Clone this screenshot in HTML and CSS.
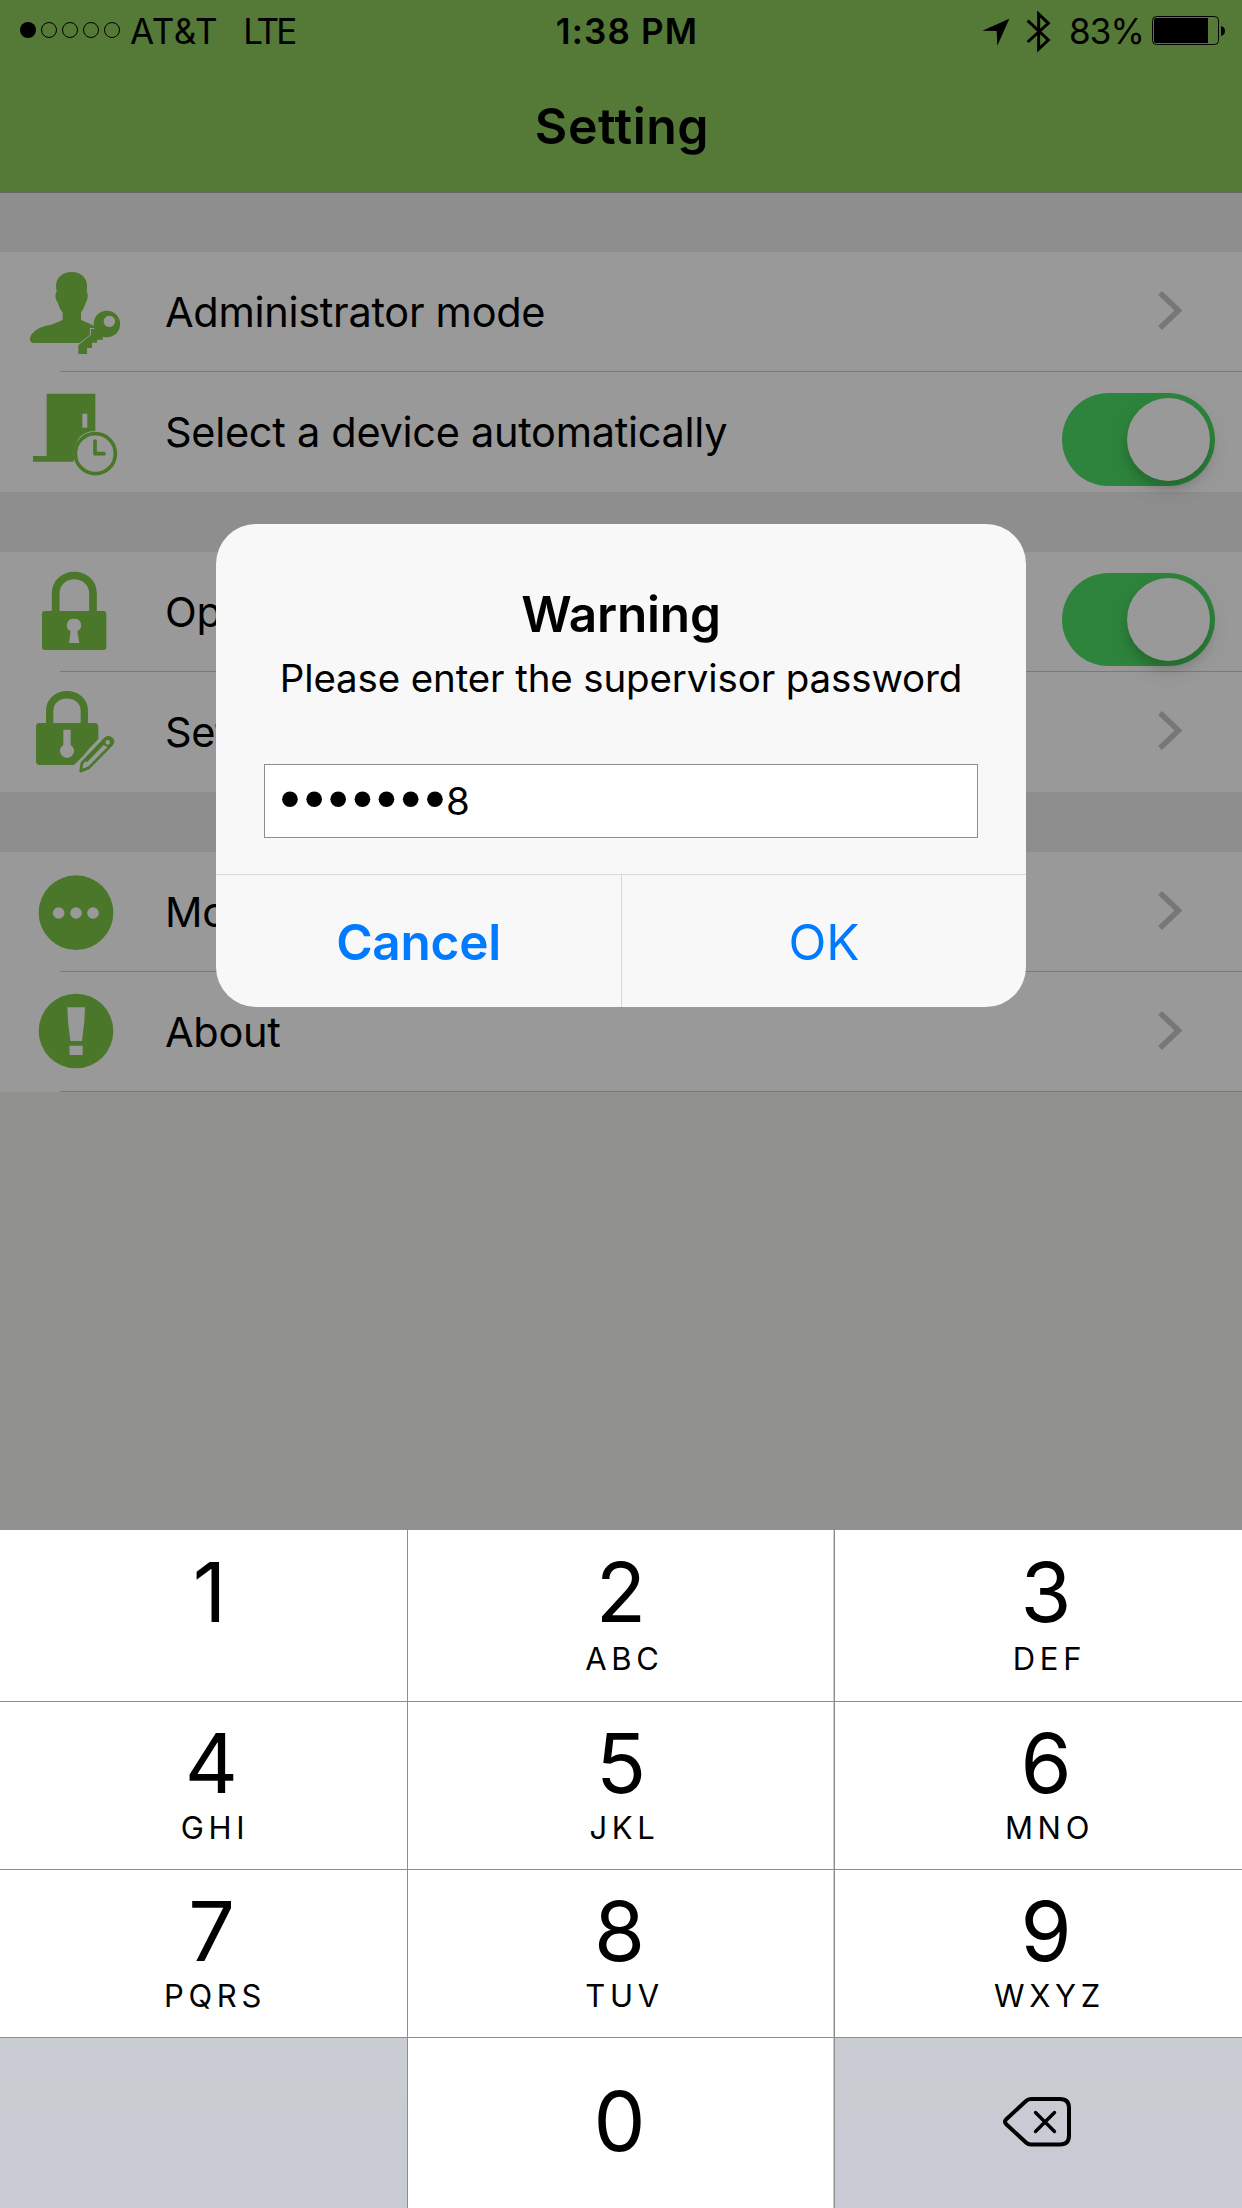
FILE: index.html
```
<!DOCTYPE html>
<html lang="en">
<head>
<meta charset="utf-8">
<title>Setting</title>
<link rel="stylesheet" href="styles.css">
</head>
<body>
<div class="screen">
  <header class="header">
    <div class="status">
      <div class="status-left">
        <svg class="signal" width="101" height="18" viewBox="0 0 101 18">
          <circle cx="8" cy="9" r="8"/>
          <g fill="none" stroke="#000" stroke-width="1"><circle cx="29" cy="9" r="7.5"/><circle cx="50" cy="9" r="7.5"/><circle cx="71" cy="9" r="7.5"/><circle cx="92" cy="9" r="7.5"/></g>
        </svg>
        <span class="carrier">AT&amp;T</span>
        <span class="network">LTE</span>
      </div>
      <div class="clock">1:38 PM</div>
      <div class="status-right">
        <svg class="status-icons" width="70" height="44" viewBox="60 24 210 132">
          <path d="M64 89L145 53L109 134L107 90Z"/>
          <path d="M200 59L262 117L233 144V39L262 67L200 123" fill="none" stroke="#000" stroke-width="9"/>
        </svg>
        <span class="percent">83%</span>
        <svg class="battery" width="74" height="30" viewBox="0 0 74 30">
          <rect x=".5" y=".5" width="66" height="28" rx="4" fill="none" stroke="#000"/>
          <path d="M4 2H56V27H4a2 2 0 0 1-2-2V4a2 2 0 0 1 2-2ZM69 10q4 1 4 5t-4 5Z"/>
        </svg>
      </div>
    </div>
    <h1 class="title">Setting</h1>
  </header>

  <main class="settings">
    <section class="group">
      <div class="row">
        <svg class="row-icon" viewBox="0 36 504 360">
          <path d="M215 96C244 96 263 114 261 142L260 155C265 160 264 178 257 188C253 202 248 211 243 217V239C258 248 272 249 282 259L283 264H270V284L239 309H101C91 309 88 299 91 291C99 271 124 259 151 255C164 250 178 245 188 239V217C182 211 177 201 174 188C166 180 164 162 170 155L168 140C168 113 187 96 215 96Z"/>
          <path fill-rule="evenodd" d="M320 212a40 40 0 1 1-12 78V299H291V308H276V324H261V342H235V316L273 284V267H284C274 240 292 212 320 212ZM328 227a17 17 0 1 0 .1 0Z"/>
        </svg>
        <span class="label">Administrator mode</span>
        <svg class="chevron" viewBox="0 0 26 42"><path d="M3 3L21.5 20.5L3 38"/></svg>
      </div>
      <div class="row">
        <svg class="row-icon" viewBox="0 396 504 360">
          <path fill-rule="evenodd" d="M140 461H286V573Q252 572 233 599Q216 629 223 659L219 665H99V648H140ZM247 521V563H262V521Z"/>
          <circle cx="286" cy="641" r="60" class="line" stroke-width="11"/>
          <path class="line" stroke-width="11" stroke-linecap="round" stroke-linejoin="round" d="M285 603V641H312"/>
        </svg>
        <span class="label">Select a device automatically</span>
        <span class="toggle"><span class="knob"></span></span>
      </div>
    </section>
    <section class="group">
      <div class="row">
        <svg class="row-icon" viewBox="0 36 504 360">
          <path class="line" stroke-width="23" d="M167 216V162C167 88 279 88 279 162V216"/>
          <path fill-rule="evenodd" d="M134 213H310Q319 213 319 222V321Q319 330 310 330H135Q126 330 126 321V222Q126 213 134 213ZM222 236A20 20 0 0 0 212 274L207 309H238L232 274A20 20 0 0 0 222 236Z"/>
        </svg>
        <span class="label">Op</span>
        <span class="toggle"><span class="knob"></span></span>
      </div>
      <div class="row">
        <svg class="row-icon" viewBox="0 396 504 360">
          <path class="line" stroke-width="22" d="M149 553V513C149 448 253 448 253 513V553"/>
          <path fill-rule="evenodd" d="M118 549H284Q295 550 295 561V597L266 628L252 645L222 675H118Q108 674 108 664V560Q108 550 118 549ZM190 569V615A21 21 0 1 0 212 615V569Z"/>
          <path class="line" stroke-width="8" stroke-linejoin="round" d="M242 693L246 669L311 601Q321 587 334 595Q343 604 335 614L267 683Z"/>
          <path class="line" stroke-width="8" d="M242 693L267 683M258 664L314 606"/>
          <circle cx="323" cy="607" r="10" class="line" stroke-width="6"/>
        </svg>
        <span class="label">Set</span>
        <svg class="chevron" viewBox="0 0 26 42"><path d="M3 3L21.5 20.5L3 38"/></svg>
      </div>
    </section>
    <section class="group last">
      <div class="row">
        <svg class="row-icon" viewBox="0 36 504 360">
          <circle cx="228" cy="218" r="112"/>
          <g class="cut"><circle cx="176" cy="219" r="17.5"/><circle cx="228" cy="219" r="17.5"/><circle cx="279" cy="219" r="17.5"/></g>
        </svg>
        <span class="label">Mo</span>
        <svg class="chevron" viewBox="0 0 26 42"><path d="M3 3L21.5 20.5L3 38"/></svg>
      </div>
      <div class="row">
        <svg class="row-icon" viewBox="0 396 504 360">
          <circle cx="228" cy="573" r="112"/>
          <path class="cut" d="M202 502H255L253 544L246 603H211L204 544ZM208 617H248V645H209Z"/>
        </svg>
        <span class="label">About</span>
        <svg class="chevron" viewBox="0 0 26 42"><path d="M3 3L21.5 20.5L3 38"/></svg>
      </div>
    </section>
  </main>

  <div class="keypad">
    <div class="key"><span class="digit one">1</span></div>
    <div class="key"><span class="digit">2</span><span class="letters">ABC</span></div>
    <div class="key"><span class="digit">3</span><span class="letters">DEF</span></div>
    <div class="key"><span class="digit">4</span><span class="letters">GHI</span></div>
    <div class="key"><span class="digit">5</span><span class="letters">JKL</span></div>
    <div class="key"><span class="digit">6</span><span class="letters">MNO</span></div>
    <div class="key"><span class="digit">7</span><span class="letters">PQRS</span></div>
    <div class="key"><span class="digit round">8</span><span class="letters">TUV</span></div>
    <div class="key"><span class="digit">9</span><span class="letters">WXYZ</span></div>
    <div class="key blank"></div>
    <div class="key zero"><span class="digit round">0</span></div>
    <div class="key blank delete">
      <svg width="70" height="52" viewBox="0 0 70 52" fill="none" stroke="#000" stroke-linecap="round" stroke-linejoin="round">
        <path stroke-width="4" d="M29 3H58Q67 3 67 12V39.500Q67 48.500 58 48.500H29Q26 48.500 24 46.500L4 28Q2 25.700 4 23.500L24 5Q26 3 29 3Z"/>
        <path stroke-width="3.400" d="M33.500 16.500L52.500 35.500M52.500 16.500L33.500 35.500"/>
      </svg>
    </div>
  </div>

  <div class="dialog">
    <h2 class="dialog-title">Warning</h2>
    <p class="dialog-text">Please enter the supervisor password</p>
    <div class="field"><span class="bullets">•••••••</span><span>8</span></div>
    <div class="actions">
      <div class="action cancel">Cancel</div>
      <div class="action ok">OK</div>
    </div>
  </div>
</div>
</body>
</html>
```
FILE: styles.css
```
* { box-sizing: border-box; }
body { margin: 0; font-family: Inter, "Liberation Sans", sans-serif; color: #000; }
h1, h2, p { margin: 0; }
svg { display: block; flex: none; }

.screen { position: relative; width: 1242px; height: 2208px; overflow: hidden; background: #91918f; display: flex; flex-direction: column; }

/* Header */
.header { height: 193px; flex: none; background: #557937; border-bottom: 1px solid #66666a; }
.status { height: 62px; padding: 0 16px 0 20px; display: grid; grid-template-columns: 1fr auto 1fr; align-items: center; font-size: 35px; line-height: 62px; white-space: nowrap; }
.status-left, .status-right { display: flex; align-items: center; }
.status-right { justify-content: flex-end; }
.signal { margin-bottom: 2px; }
.carrier { margin-left: 9px; letter-spacing: .6px; }
.network { margin-left: 25px; letter-spacing: -3px; }
.clock { font-weight: 600; letter-spacing: 1.2px; padding-left: 8px; }
.percent { margin-left: 18px; letter-spacing: -.9px; }
.battery { margin-left: 8px; }
.title { font-size: 50px; font-weight: 600; line-height: 128px; letter-spacing: .5px; text-align: center; padding-left: 2px; }

/* Settings list */
.settings { flex: 1; }
.group { background: #999; border-top: 60px solid #8e8e8e; height: 300px; }
.group:first-child { border-top-width: 59px; height: 299px; }
.row { position: relative; height: 120px; display: flex; align-items: center; }
.row:first-child::after, .last .row::after { content: ""; position: absolute; left: 60px; right: 0; bottom: 0; height: 1px; background: #79797a; }
.row-icon { width: 168px; height: 120px; fill: #4a7729; margin-right: -3px; }
.row-icon .line { fill: none; stroke: #4a7729; }
.row-icon .cut { fill: #999; }
.label { flex: 1; font-size: 41.5px; line-height: 120px; letter-spacing: -.3px; white-space: nowrap; }
.chevron { width: 26px; height: 42px; margin: 0 59px 2px 0; fill: none; stroke: #77777a; stroke-width: 5.5; }
.toggle { width: 153px; height: 93px; margin: 15px 27px 0 0; padding: 5px; border-radius: 47px; background: #2e843c; display: flex; justify-content: flex-end; z-index: 1; }
.knob { width: 83px; height: 83px; border-radius: 50%; background: #999; box-shadow: 0 8px 10px rgba(0,0,0,.13), 0 8px 24px rgba(0,0,0,.1); }

/* Numeric keypad */
.keypad { height: 678px; flex: none; background: #fff; display: grid; grid-template-columns: 408px 427px 407px; grid-template-rows: 172px 168px 168px 170px; }
.key { padding: 21px 0 0; display: flex; flex-direction: column; align-items: center; border-bottom: 1px solid #8e8e8e; }
.key:nth-child(-n+3) { padding-top: 22px; }
.key:nth-child(3n+1) { padding-left: 16px; border-right: 1px solid #8e8e8e; }
.key:nth-child(3n+2) { border-right: 1px solid #8e8e8e; box-shadow: inset -1px 0 #ccc; }
.key:nth-child(3n) { padding-left: 15px; }
.key:nth-child(n+10) { border-bottom: 0; }
.digit { font-size: 82.5px; line-height: 80px; }
.digit.one { padding-right: 4px; }
.digit.round { padding-right: 3px; }
.letters { margin-top: 5px; padding-left: 7px; font-size: 31px; line-height: 40px; letter-spacing: 4.7px; }
.key:nth-child(-n+3) .letters { margin-top: 7px; }
.zero { padding-top: 43px; }
.blank { background: linear-gradient(#c9cdd1, #c9ccd4 14%, #c9cdd1 32%, #c8cbd3 48%); }
.key.delete { align-items: flex-start; padding-top: 58px; padding-left: 167px; }

/* Password prompt */
.dialog { position: absolute; left: 216px; top: 524px; width: 810px; height: 483px; padding-top: 60px; border-radius: 40px; background: #f8f8f8; overflow: hidden; text-align: center; }
.dialog-title { font-size: 49.5px; font-weight: 600; line-height: 60px; letter-spacing: -.2px; }
.dialog-text { margin-top: 10px; font-size: 38.5px; line-height: 48px; letter-spacing: -.13px; white-space: nowrap; }
.field { height: 74px; margin: 62px 48px 36px; padding-left: 9px; display: flex; align-items: center; background: #fff; border: 1px solid #8e8e8e; font-size: 38.5px; line-height: 72px; }
.bullets { font-family: "DejaVu Sans", sans-serif; font-size: 54px; letter-spacing: -7.7px; margin-right: 3px; }
.actions { height: 133px; display: grid; grid-template-columns: 406px 1fr; border-top: 1px solid #d6d8d9; color: #007aff; font-size: 49.5px; line-height: 134px; }
.cancel { font-weight: 600; letter-spacing: -.25px; border-right: 1px solid #d6d8d9; }
```
